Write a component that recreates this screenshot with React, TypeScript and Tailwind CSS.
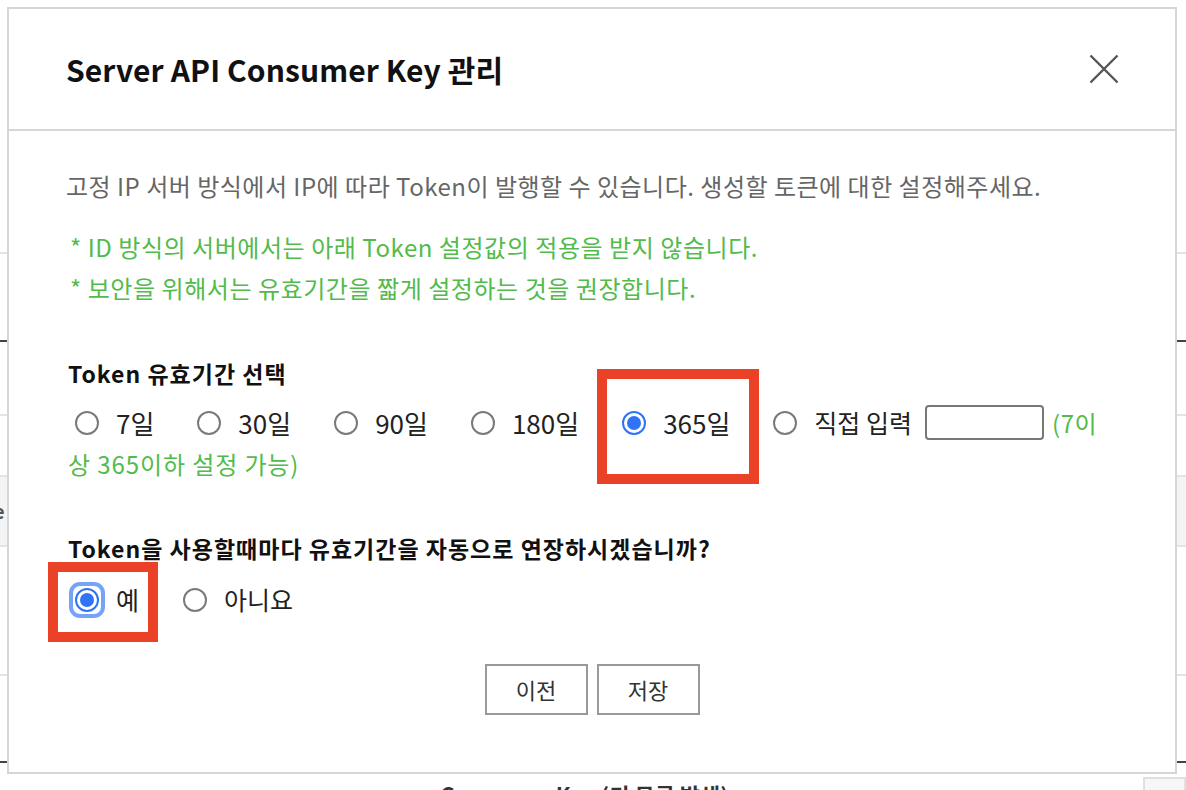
import { useState } from "react";

const PERIODS = ["7일", "30일", "90일", "180일", "365일"];

function Radio({ checked = false, focused = false }: { checked?: boolean; focused?: boolean }) {
  return (
    <span className="relative inline-flex shrink-0 w-[24px] h-[24px]">
      {focused && (
        <span className="absolute -inset-[6px] rounded-[11px] border-[4px] border-[#76a3f7]" />
      )}
      <span
        className={`flex w-[24px] h-[24px] items-center justify-center rounded-full border-2 bg-white ${
          checked ? "border-[#2f74f5]" : "border-[#7a7a7a]"
        }`}
      >
        {checked && <span className="w-[14px] h-[14px] rounded-full bg-[#2f74f5]" />}
      </span>
    </span>
  );
}

function RadioItem({ label, checked, focused }: { label: string; checked?: boolean; focused?: boolean }) {
  return (
    <span className="inline-flex items-center gap-[17px]">
      <Radio checked={checked} focused={focused} />
      <span>{label}</span>
    </span>
  );
}

export default function App() {
  const [period] = useState("365일");

  return (
    <div className="relative w-[1186px] h-[790px] overflow-hidden bg-white font-['Noto_Sans_CJK_KR','Noto_Sans',sans-serif]">
      {/* page behind the modal */}
      <div className="flex flex-col">
        <div className="h-[254px] border-b-2 border-[#e3e3e3]" />
        <div className="h-[88px] border-b-2 border-[#444]" />
        <div className="h-[74px] border-b-2 border-[#e3e3e3]" />
        <div className="h-[61px] border-b-2 border-[#e3e3e3]" />
        <div className="h-[70px] border-b-2 border-[#e3e3e3] bg-[#f4f4f4] flex items-center">
          <span className="-ml-[7px] text-[20px] font-bold text-[#555]">e</span>
        </div>
        <div className="h-[129px] border-b-2 border-[#e3e3e3]" />
        <div className="h-[87px] border-b-2 border-[#444]" />
        <div className="flex justify-between">
          <div className="flex-1 pt-[20px] pl-[440px] text-[22px] font-bold text-[#333] leading-none">
            Consumer Key (키 목록 발생)
          </div>
          <div className="mt-[14px] w-[43px] h-[20px] border-2 border-[#e0e0e0] bg-[#f7f7f7]" />
        </div>
      </div>

      {/* modal */}
      <div className="absolute left-[7px] top-[7px] w-[1170px] border-2 border-[#d6d6d6] bg-white">
        <div className="flex h-[122px] items-center justify-between border-b-2 border-[#d6d6d6] pl-[57px] pr-[56px]">
          <h1 className="text-[30px] font-semibold tracking-[0.1px] text-[#111]">Server API Consumer Key 관리</h1>
          <button className="text-[#555]">
            <svg width="30" height="30" viewBox="0 0 30 30" fill="none" stroke="currentColor" strokeWidth="2.4">
              <path d="M1.5 1.5 L28.5 28.5 M28.5 1.5 L1.5 28.5" />
            </svg>
          </button>
        </div>

        <div className="pl-[57px] pr-[40px] pt-[38px] pb-[57px]">
          <p className="text-[24px] leading-[34px] tracking-[0.5px] text-[#666]">
            고정 IP 서버 방식에서 IP에 따라 Token이 발행할 수 있습니다. 생성할 토큰에 대한 설정해주세요.
          </p>
          <div className="mt-[23px] text-[24px] leading-[41px] tracking-[0.55px] text-[#52bb4b] pl-[4px]">
            <p>* ID 방식의 서버에서는 아래 Token 설정값의 적용을 받지 않습니다.</p>
            <p>* 보안을 위해서는 유효기간을 짧게 설정하는 것을 권장합니다.</p>
          </div>

          <h2 className="mt-[48px] text-[23px] leading-[34px] tracking-[1px] font-bold text-[#111] pl-[2px]">
            Token 유효기간 선택
          </h2>
          <div className="mt-[12px] text-[26px] text-[#222]">
            <div className="flex h-[41px] items-center gap-[43px] pl-[9px]">
              {PERIODS.map((p) => (
                <RadioItem key={p} label={p} checked={p === period} />
              ))}
              <span className="flex items-center text-[25px]">
                <RadioItem label="직접 입력" />
                <span className="ml-[13px] w-[119px] h-[35px] rounded-[4px] border-2 border-[#777] bg-white" />
                <span className="ml-[8px] text-[24px] tracking-[0.6px] text-[#52bb4b]">(7이</span>
              </span>
            </div>
            <div className="h-[41px] leading-[41px] pl-[2px] text-[24px] tracking-[0.9px] text-[#52bb4b]">
              상 365이하 설정 가능)
            </div>
          </div>

          <h2 className="mt-[47px] text-[23px] leading-[34px] tracking-[1px] font-bold text-[#111] pl-[2px]">
            Token을 사용할때마다 유효기간을 자동으로 연장하시겠습니까?
          </h2>
          <div className="mt-[14px] flex h-[41px] items-center gap-[44px] text-[25px] text-[#222] pl-[9px]">
            <RadioItem label="예" checked focused />
            <RadioItem label="아니요" />
          </div>

          <div className="mt-[44px] flex justify-center gap-[9px] pr-[17px]">
            <button className="w-[103px] h-[51px] border-2 border-[#999] bg-white text-[22px] text-[#333]">이전</button>
            <button className="w-[103px] h-[51px] border-2 border-[#999] bg-white text-[22px] text-[#333]">저장</button>
          </div>
        </div>
      </div>

      {/* annotation boxes */}
      <div className="absolute left-[597px] top-[369px] w-[162px] h-[115px] border-[10px] border-[#eb4127]" />
      <div className="absolute left-[48px] top-[562px] w-[110px] h-[80px] border-[10px] border-[#eb4127]" />
    </div>
  );
}
